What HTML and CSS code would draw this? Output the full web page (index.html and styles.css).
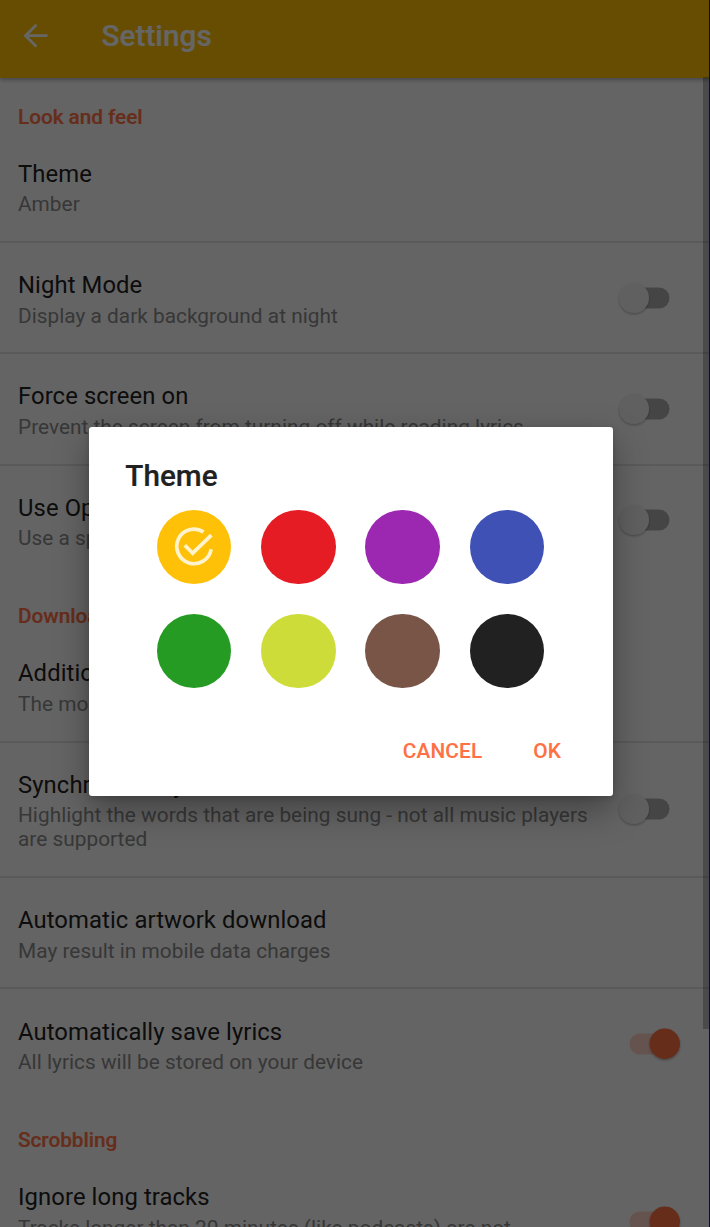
FILE: index.html
```
<!DOCTYPE html>
<html lang="en">
<head>
<meta charset="utf-8">
<title>Settings</title>
<link rel="stylesheet" href="styles.css">
</head>
<body>
<svg width="0" height="0" class="defs">
  <defs>
    <filter id="thumb-shadow" x="-30%" y="-30%" width="160%" height="170%"><feDropShadow dx="0" dy="1.3" stdDeviation="0.9" flood-opacity=".3"/></filter>
    <symbol id="switch-off" viewBox="0 0 64 38">
      <rect x="12" y="8.5" width="39.5" height="21" rx="10.5" fill="#adadad"/>
      <circle cx="16" cy="18.8" r="15" fill="#f0f0f0" filter="url(#thumb-shadow)"/>
    </symbol>
    <symbol id="switch-on" viewBox="0 0 64 38">
      <rect x="11.5" y="8.5" width="40" height="21" rx="10.5" fill="#ff7043" fill-opacity=".3"/>
      <circle cx="46.8" cy="18.8" r="15.2" fill="#ff7043" filter="url(#thumb-shadow)"/>
    </symbol>
  </defs>
</svg>
<div class="screen">
  <header class="toolbar">
    <svg class="back" viewBox="0 0 24 24"><path d="M23.5 11.7H1.6M12.4 .8L1.5 11.7l10.9 10.9" fill="none" stroke="#fff" stroke-width="2.8"/></svg>
    <h1 class="toolbar-title">Settings</h1>
  </header>
  <main class="list">
    <h2 class="section">Look and feel</h2>
    <div class="row first"><div class="text"><div class="title">Theme</div><div class="summary">Amber</div></div></div>
    <div class="row"><div class="text"><div class="title">Night Mode</div><div class="summary">Display a dark background at night</div></div><svg class="switch"><use href="#switch-off"/></svg></div>
    <div class="row"><div class="text"><div class="title">Force screen on</div><div class="summary">Prevent the screen from turning off while reading lyrics</div></div><svg class="switch"><use href="#switch-off"/></svg></div>
    <div class="row"><div class="text"><div class="title">Use OpenDyslexic</div><div class="summary">Use a special font for dyslexia</div></div><svg class="switch"><use href="#switch-off"/></svg></div>
    <h2 class="section">Downloads</h2>
    <div class="row first"><div class="text"><div class="title">Additional providers</div><div class="summary">The more, the slower</div></div></div>
    <div class="row"><div class="text"><div class="title">Synchronized lyrics</div><div class="summary">Highlight the words that are being sung - not all music players<br>are supported</div></div><svg class="switch"><use href="#switch-off"/></svg></div>
    <div class="row"><div class="text"><div class="title">Automatic artwork download</div><div class="summary">May result in mobile data charges</div></div></div>
    <div class="row"><div class="text"><div class="title">Automatically save lyrics</div><div class="summary">All lyrics will be stored on your device</div></div><svg class="switch"><use href="#switch-on"/></svg></div>
    <h2 class="section">Scrobbling</h2>
    <div class="row first tall"><div class="text"><div class="title">Ignore long tracks</div><div class="summary">Tracks longer than 20 minutes (like podcasts) are not</div></div><svg class="switch"><use href="#switch-on"/></svg></div>
  </main>
  <div class="scrollbar"></div>
  <div class="scrim"></div>
  <div class="edge"></div>
  <section class="dialog">
    <h2 class="dialog-title">Theme</h2>
    <div class="swatches">
      <div class="swatch amber"><svg class="check" viewBox="0 0 40 40"><path d="M29.5 4.9A17.3 17.3 0 1 0 37.1 22.2M10.8 18.2l7.9 8L37.4 8.2" fill="none" stroke="#fff3cd" stroke-width="3.7"/></svg></div>
      <div class="swatch red"></div>
      <div class="swatch purple"></div>
      <div class="swatch indigo"></div>
      <div class="swatch green"></div>
      <div class="swatch lime"></div>
      <div class="swatch brown"></div>
      <div class="swatch black"></div>
    </div>
    <div class="actions"><span>CANCEL</span><span>OK</span></div>
  </section>
</div>
</body>
</html>
```
FILE: styles.css
```
* { box-sizing: border-box; }
body { margin: 0; font-family: Roboto, sans-serif; background: #fafafa; overflow: hidden; }
h1, h2 { margin: 0; font-weight: 500; -webkit-text-stroke: .2px currentColor; }
.defs { position: absolute; }
.screen { position: relative; width: 710px; height: 1227px; overflow: hidden; }
.toolbar { position: relative; height: 77.5px; padding: 0 0 5px 24px; display: flex; align-items: center; gap: 53.5px; background: #ffc107; box-shadow: 0 2px 4px rgba(0,0,0,.3); }
.back { width: 24px; height: 24px; margin-top: -1px; }
.toolbar-title { font-size: 29.7px; line-height: 36px; letter-spacing: .05px; color: #fff; }
.list { margin-top: -2px; }
.section { height: 54.3px; padding: 29.5px 18px 0; font-size: 20.8px; line-height: 25px; letter-spacing: -.05px; color: #ff7043; }
.row { min-height: 111.25px; padding: 26.1px 28px 24.4px 18px; display: flex; align-items: center; justify-content: space-between; border-top: 2px solid #e2e2e2; }
.row.first { border-top-color: transparent; }
.row.tall { min-height: 135.65px; }
.text { white-space: nowrap; align-self: flex-start; }
.title { font-size: 23.8px; line-height: 32px; letter-spacing: .1px; color: #212121; }
.summary { margin-top: 2.4px; font-size: 20.8px; line-height: 24.4px; letter-spacing: .03px; color: #8b8b8b; }
.switch { width: 64px; height: 38px; margin: -11px 0 -9px; flex: none; }
.scrollbar { position: absolute; left: 703px; top: 77px; width: 7px; height: 952px; background: rgba(0,0,0,.25); }
.scrim { position: absolute; inset: 0; background: rgba(0,0,0,.6); }
.edge { position: absolute; right: 0; top: 0; width: 1px; height: 100%; background: #120b29; }
.dialog { position: absolute; left: 89.3px; top: 427px; width: 523.6px; height: 369px; padding: 30.5px 36px 0; border-radius: 3px; background: #fff; box-shadow: 0 14px 34px rgba(0,0,0,.34), 0 2px 6px rgba(0,0,0,.14); }
.dialog-title { font-size: 29.7px; line-height: 36px; color: #212121; }
.swatches { display: grid; grid-template-columns: repeat(4, 74.5px); gap: 29.8px; padding: 16px 0 0 31.6px; }
.swatch { height: 74.5px; border-radius: 50%; display: flex; align-items: center; justify-content: center; }
.check { width: 40px; height: 40px; margin-top: 1px; }
.amber { background: #ffc107; }
.red { background: #e51c23; }
.purple { background: #9c27b0; }
.indigo { background: #3f51b5; }
.green { background: #259b24; }
.lime { background: #cddc39; }
.brown { background: #795548; }
.black { background: #212121; }
.actions { display: flex; justify-content: flex-end; gap: 51px; padding: 51px 15.8px 0 0; font-size: 20.8px; line-height: 25px; letter-spacing: .15px; font-weight: 500; color: #ff7043; -webkit-text-stroke: .1px currentColor; }
```
